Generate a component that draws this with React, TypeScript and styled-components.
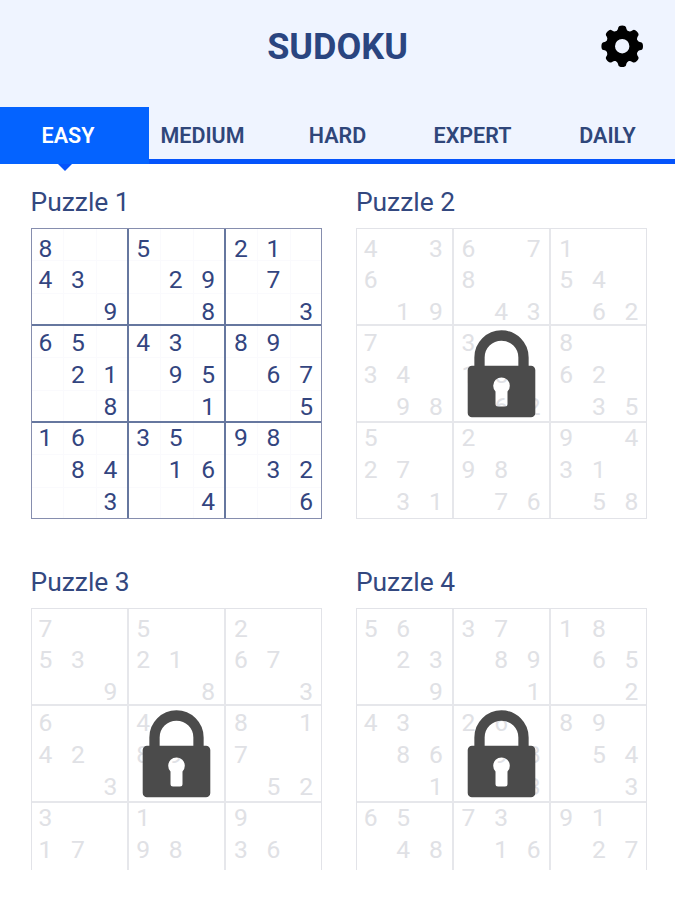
import React from "react";
import styled, { createGlobalStyle } from "styled-components";

const GlobalStyle = createGlobalStyle`
  *, *::before, *::after { box-sizing: border-box; }
  body {
    margin: 0;
    background: #fff;
    font-family: Roboto, "Liberation Sans", sans-serif;
    overflow: hidden;
  }
`;

const Screen = styled.div`
  width: 675px;
  height: 900px;
  background: #fff;
`;

const Header = styled.header`
  height: 107px;
  padding: 0 30px;
  background: #eff4ff;
  display: grid;
  grid-template-columns: 50px 1fr 50px;
  align-items: start;
`;

const Title = styled.h1`
  grid-column: 2;
  margin: 0;
  padding-top: 26px;
  text-align: center;
  font-size: 36px;
  line-height: 42px;
  font-weight: 700;
  color: #2a4580;
`;

const SettingsButton = styled.button`
  justify-self: end;
  margin: 25px 1px 0 0;
  padding: 0;
  border: 0;
  background: none;
  width: 43px;
  height: 43px;
  svg { display: block; }
`;

const Tabs = styled.nav`
  height: 57px;
  display: grid;
  grid-template-columns: repeat(5, 135px);
  background: #eff4ff;
  border-bottom: 5px solid #0554fb;
`;

const Tab = styled.button<{ $active?: boolean }>`
  position: relative;
  width: ${(p) => (p.$active ? "149px" : "135px")};
  height: ${(p) => (p.$active ? "57px" : "52px")};
  border: 0;
  margin: 0;
  padding: ${(p) => (p.$active ? "0 13px 0 0" : "5px 0 0 0")};
  background: ${(p) => (p.$active ? "#0463ff" : "transparent")};
  color: ${(p) => (p.$active ? "#fff" : "#2f467a")};
  font: 600 21.5px/26px Roboto, "Liberation Sans", sans-serif;
  text-align: center;

  &::after {
    content: "";
    display: ${(p) => (p.$active ? "block" : "none")};
    position: absolute;
    left: 58px;
    top: 100%;
    border: 7px solid transparent;
    border-top-color: #0554fb;
    border-bottom: 0;
  }
`;

const PuzzleList = styled.main`
  height: 706px;
  padding: 22px 0 0 31px;
  overflow: hidden;
  display: grid;
  grid-template-columns: 291px 291px;
  grid-auto-rows: 380px;
  column-gap: 34.4px;
`;

const PuzzleTitle = styled.h2`
  margin: 0 0 0 -0.5px;
  height: 42px;
  font-size: 26.4px;
  line-height: 33px;
  font-weight: 400;
  color: #33487f;
`;

const Board = styled.div<{ $locked: boolean }>`
  --edge: ${(p) => (p.$locked ? "#e2e3e8" : "#868eae")};
  --line: ${(p) => (p.$locked ? "#e6e7eb" : "#66779f")};
  --inner: ${(p) => (p.$locked ? "transparent" : "#fafafd")};
  --digit: ${(p) => (p.$locked ? "#e0e1e5" : "#33457f")};
  display: grid;
  grid-template: 291px / 291px;
  > * { grid-area: 1 / 1; }
`;

const Boxes = styled.div`
  display: grid;
  grid-template-columns: repeat(3, 95px);
  grid-template-rows: repeat(3, 95px);
  gap: 2px;
  border: 1px solid var(--edge);
  background: var(--line);
`;

const Box = styled.div`
  background:
    linear-gradient(90deg, transparent 31px, var(--inner) 31px 32px, transparent 32px 64px, var(--inner) 64px 65px, transparent 65px),
    linear-gradient(transparent 31px, var(--inner) 31px 32px, transparent 32px 64px, var(--inner) 64px 65px, transparent 65px),
    #fff;
`;

const Digits = styled.div`
  display: grid;
  grid-template-columns: repeat(9, 32.6px);
  grid-template-rows: repeat(9, 31.65px);
  margin: 5px 0 0 -2px;
  color: var(--digit);
  font-size: 24.6px;
  font-weight: 400;
`;

const Digit = styled.span`
  display: flex;
  align-items: center;
  justify-content: center;
  line-height: 1;
`;

const LockSlot = styled.div`
  place-self: center;
  margin-left: -1px;
  z-index: 1;
  svg { display: block; }
`;

const GearIcon = () => (
  <svg width="43" height="43" viewBox="-21.2 -21.2 43 43">
    <g fill="#000">
      {[0, 45, 90, 135, 180, 225, 270, 315].map((a) => (
        <path key={a} transform={`rotate(${a})`} d="M-7 -14C-4.8 -15.8 -4.2 -17 -3.9 -18.8Q-3.4 -20.8 0 -20.8T3.9 -18.8C4.2 -17 4.8 -15.8 7 -14Z" />
      ))}
      <path fillRule="evenodd" d="M0-16.3A16.3 16.3 0 1 1 0 16.3A16.3 16.3 0 1 1 0-16.3ZM0-7.2A7.2 7.2 0 1 0 0 7.2A7.2 7.2 0 1 0 0-7.2Z" />
    </g>
  </svg>
);

const LockIcon = () => (
  <svg width="69" height="88" viewBox="0 0 69 88">
    <path d="M12.5 40V27.500a22 22 0 0 1 44 0V40" fill="none" stroke="#4b4b4b" strokeWidth="10.3" />
    <path
      fill="#4b4b4b"
      fillRule="evenodd"
      d="M5 35.700H64a4.300 4.300 0 0 1 4.300 4.300V83a4.300 4.300 0 0 1-4.300 4.300H5A4.300 4.300 0 0 1 .7 83V40A4.300 4.300 0 0 1 5 35.700ZM28.500 61.500V74a2.500 2.500 0 0 0 2.500 2.500H38a2.500 2.500 0 0 0 2.500-2.500V61.500a8.300 8.300 0 1 0-12 0Z"
    />
  </svg>
);

interface Puzzle {
  name: string;
  locked: boolean;
  rows: string[];
}

const puzzles: Puzzle[] = [
  {
    name: "Puzzle 1",
    locked: false,
    rows: ["8..5..21.", "43..29.7.", "..9..8..3", "65.43.89.", ".21.95.67", "..8..1..5", "16.35.98.", ".84.16.32", "..3..4..6"],
  },
  {
    name: "Puzzle 2",
    locked: true,
    rows: ["4.36.71..", "6..8..54.", ".19.43.62", "7..3..8..", "34.15.62.", ".98.62.35", "5..2..9.4", "27.98.31.", ".31.76.58"],
  },
  {
    name: "Puzzle 3",
    locked: true,
    rows: ["7..5..2..", "53.21.67.", "..9..8..3", "6..4..8.1", "42.89.7..", "..3....52", "3..1..9..", "17.98.36.", "........."],
  },
  {
    name: "Puzzle 4",
    locked: true,
    rows: ["56.37.18.", ".23.89.65", "..9..1..2", "43.26.89.", ".86.98.54", "..1..3..3", "65.73.91.", ".48.16.27", "........."],
  },
];

const tabs = ["EASY", "MEDIUM", "HARD", "EXPERT", "DAILY"];

const PuzzleCard = ({ name, locked, rows }: Puzzle) => (
  <section>
    <PuzzleTitle>{name}</PuzzleTitle>
    <Board $locked={locked}>
      <Boxes>
        {Array.from({ length: 9 }, (_, i) => (
          <Box key={i} />
        ))}
      </Boxes>
      <Digits>
        {rows.join("").split("").map((d, i) => (
          <Digit key={i}>{d === "." ? "" : d}</Digit>
        ))}
      </Digits>
      {locked && (
        <LockSlot>
          <LockIcon />
        </LockSlot>
      )}
    </Board>
  </section>
);

export default function App() {
  return (
    <>
      <GlobalStyle />
      <Screen>
        <Header>
          <Title>SUDOKU</Title>
          <SettingsButton aria-label="Settings">
            <GearIcon />
          </SettingsButton>
        </Header>
        <Tabs>
          {tabs.map((t, i) => (
            <Tab key={t} $active={i === 0}>
              {t}
            </Tab>
          ))}
        </Tabs>
        <PuzzleList>
          {puzzles.map((p) => (
            <PuzzleCard key={p.name} {...p} />
          ))}
        </PuzzleList>
      </Screen>
    </>
  );
}
